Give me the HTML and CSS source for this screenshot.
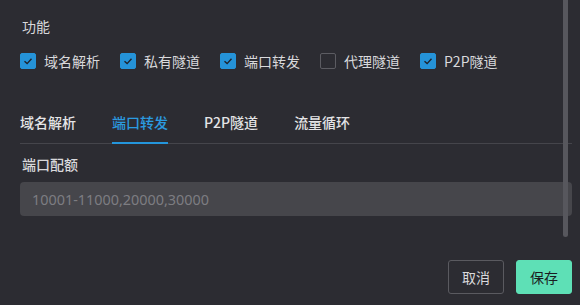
FILE: index.html
```html
<!DOCTYPE html>
<html lang="zh">
<head>
<meta charset="utf-8">
<link rel="stylesheet" href="styles.css">
</head>
<body>
<div class="panel">
  <div class="section-title">功能</div>
  <div class="features">
    <label class="check"><span class="box on"><svg viewBox="0 0 16 16"><polyline points="4,8.2 7,11 12,5.5"/></svg></span>域名解析</label>
    <label class="check"><span class="box on"><svg viewBox="0 0 16 16"><polyline points="4,8.2 7,11 12,5.5"/></svg></span>私有隧道</label>
    <label class="check"><span class="box on"><svg viewBox="0 0 16 16"><polyline points="4,8.2 7,11 12,5.5"/></svg></span>端口转发</label>
    <label class="check"><span class="box"></span>代理隧道</label>
    <label class="check"><span class="box on"><svg viewBox="0 0 16 16"><polyline points="4,8.2 7,11 12,5.5"/></svg></span>P2P隧道</label>
  </div>
  <div class="tabs">
    <div class="tab">域名解析</div>
    <div class="tab active">端口转发</div>
    <div class="tab">P2P隧道</div>
    <div class="tab">流量循环</div>
  </div>
  <div class="field-label">端口配额</div>
  <input class="input" type="text" placeholder="10001-11000,20000,30000">
  <div class="footer">
    <button class="btn">取消</button>
    <button class="btn primary">保存</button>
  </div>
  <div class="scrollbar"></div>
</div>
</body>
</html>
```
FILE: styles.css
```css
html, body {
  margin: 0;
  padding: 0;
  background: #2c2c32;
}
body {
  width: 580px;
  height: 305px;
  overflow: hidden;
  font-family: "Noto Sans CJK SC", "Noto Sans", sans-serif;
  font-size: 14px;
  color: #d9d9dc;
}
.panel {
  position: relative;
  padding: 15px 8px 0 20px;
  height: 305px;
  box-sizing: border-box;
}
.section-title {
  line-height: 22px;
  padding-left: 2px;
}
.features {
  display: flex;
  gap: 20px;
  margin-top: 13px;
  height: 22px;
  align-items: center;
}
.check {
  display: flex;
  align-items: center;
  gap: 8px;
  line-height: 22px;
}
.box {
  width: 16px;
  height: 16px;
  box-sizing: border-box;
  border: 1px solid #5c5c62;
  border-radius: 2px;
  display: block;
}
.box.on {
  background: #2593d8;
  border-color: #2593d8;
}
.box svg {
  display: block;
  width: 14px;
  height: 14px;
}
.box polyline {
  fill: none;
  stroke: #1f232a;
  stroke-width: 1.6;
}
.tabs {
  display: flex;
  gap: 36px;
  margin-top: 29px;
  border-bottom: 1px solid #45454b;
}
.tab {
  padding: 10px 0 9px;
  line-height: 22px;
  border-bottom: 2px solid transparent;
  margin-bottom: -1px;
  font-weight: 500;
  color: #e4e4e6;
}
.tab.active {
  color: #2b9be0;
  border-bottom-color: #2496dc;
}
.field-label {
  margin-top: 9px;
  line-height: 22px;
  padding-left: 2px;
  font-weight: 500;
}
.input {
  display: block;
  margin-top: 7px;
  width: 100%;
  height: 34px;
  box-sizing: border-box;
  border: none;
  border-radius: 4px;
  background: #46464b;
  padding: 0 12px;
  font-family: "Noto Sans", "Noto Sans CJK SC", sans-serif;
  font-size: 14.4px;
  color: #d9d9dc;
  outline: none;
}
.input::placeholder {
  color: #7d7d82;
}
.footer {
  display: flex;
  justify-content: flex-end;
  gap: 12px;
  margin-top: 44px;
}
.btn {
  height: 34px;
  padding: 0 13px;
  box-sizing: border-box;
  border: 1px solid #5a5a60;
  border-radius: 3px;
  background: transparent;
  color: #d9d9dc;
  font-family: "Noto Sans CJK SC", "Noto Sans", sans-serif;
  font-size: 14px;
  line-height: 22px;
}
.btn.primary {
  background: #5ee0b6;
  border-color: #5ee0b6;
  color: #1b1d22;
}
.scrollbar {
  position: absolute;
  left: 563px;
  top: 0;
  width: 5px;
  height: 237px;
  background: #57575d;
  border-radius: 0 0 3px 3px;
}
```
